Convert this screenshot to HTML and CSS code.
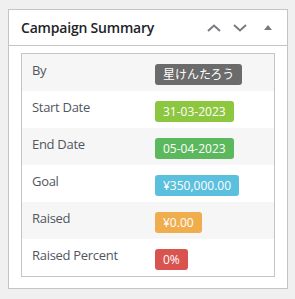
FILE: index.html
```html
<!DOCTYPE html>
<html lang="en">
<head>
  <meta charset="UTF-8" />
  <title>Campaign Summary</title>
  <link rel="stylesheet" href="styles.css">
</head>
<body>
  <div class="postbox">
    <div class="postbox-header">
      <h2 class="hndle">Campaign Summary</h2>
      <div class="handle-actions">
        <span class="handle-btn">
          <svg width="14" height="8" viewBox="0 0 14 8"><path d="M1 7 L7 1.5 L13 7" fill="none" stroke="#787c82" stroke-width="2"/></svg>
        </span>
        <span class="handle-btn">
          <svg width="14" height="8" viewBox="0 0 14 8"><path d="M1 1 L7 6.5 L13 1" fill="none" stroke="#787c82" stroke-width="2"/></svg>
        </span>
        <span class="handle-btn toggle">
          <svg width="8" height="5" viewBox="0 0 8 5"><path d="M4 0 L8 5 L0 5 Z" fill="#787c82"/></svg>
        </span>
      </div>
    </div>

    <div class="inside">
      <div class="summary-table">
        <div class="summary-row">
          <span class="summary-label">By</span>
          <span><span class="badge badge-default">星けんたろう</span></span>
        </div>
        <div class="summary-row">
          <span class="summary-label">Start Date</span>
          <span><span class="badge badge-lime">31-03-2023</span></span>
        </div>
        <div class="summary-row">
          <span class="summary-label">End Date</span>
          <span><span class="badge badge-success">05-04-2023</span></span>
        </div>
        <div class="summary-row">
          <span class="summary-label">Goal</span>
          <span><span class="badge badge-info">¥350,000.00</span></span>
        </div>
        <div class="summary-row">
          <span class="summary-label">Raised</span>
          <span><span class="badge badge-warning">¥0.00</span></span>
        </div>
        <div class="summary-row">
          <span class="summary-label">Raised Percent</span>
          <span><span class="badge badge-danger">0%</span></span>
        </div>
      </div>
    </div>
  </div>
</body>
</html>
```

FILE: styles.css
```css
* {
  margin: 0;
  padding: 0;
  box-sizing: border-box;
}

body {
  background: #f0f0f1;
  font-family: 'Open Sans', 'Noto Sans CJK JP', sans-serif;
  color: #50575e;
  padding: 9px 0 0 8px;
}

.postbox {
  width: 280px;
  background: #fff;
  border: 1px solid #c3c4c7;
  box-shadow: 0 1px 1px rgba(0, 0, 0, 0.04);
}

.postbox-header {
  display: flex;
  align-items: center;
  height: 36px;
  border-bottom: 1px solid #c3c4c7;
}

.hndle {
  font-size: 14px;
  font-weight: 600;
  color: #1d2327;
  padding-left: 12px;
  letter-spacing: -0.2px;
}

.handle-actions {
  display: flex;
  margin-left: auto;
  padding-right: 4px;
}

.handle-btn {
  display: flex;
  align-items: center;
  justify-content: center;
  width: 26px;
  height: 34px;
}

.handle-btn.toggle {
  width: 30px;
}

.inside {
  padding: 7px 12px 11px;
}

.summary-table {
  border: 1px solid #c3c4c7;
}

.summary-row {
  display: grid;
  grid-template-columns: 123px 1fr;
  padding: 8px 10px;
  height: 37px;
}

.summary-row:nth-child(odd) {
  background: #f6f6f6;
}

.summary-label {
  font-size: 13px;
  line-height: 17px;
  letter-spacing: -0.3px;
}

.badge {
  display: inline-block;
  font-size: 12px;
  line-height: 21px;
  height: 21px;
  padding: 0 8px;
  color: #fff;
  border-radius: 3px;
}

.badge-default { background: #6b6b6b; }
.badge-lime { background: #8dc63f; }
.badge-success { background: #5cb85c; }
.badge-info { background: #5bc0de; }
.badge-warning { background: #f0ad4e; }
.badge-danger { background: #d9534f; }
```
